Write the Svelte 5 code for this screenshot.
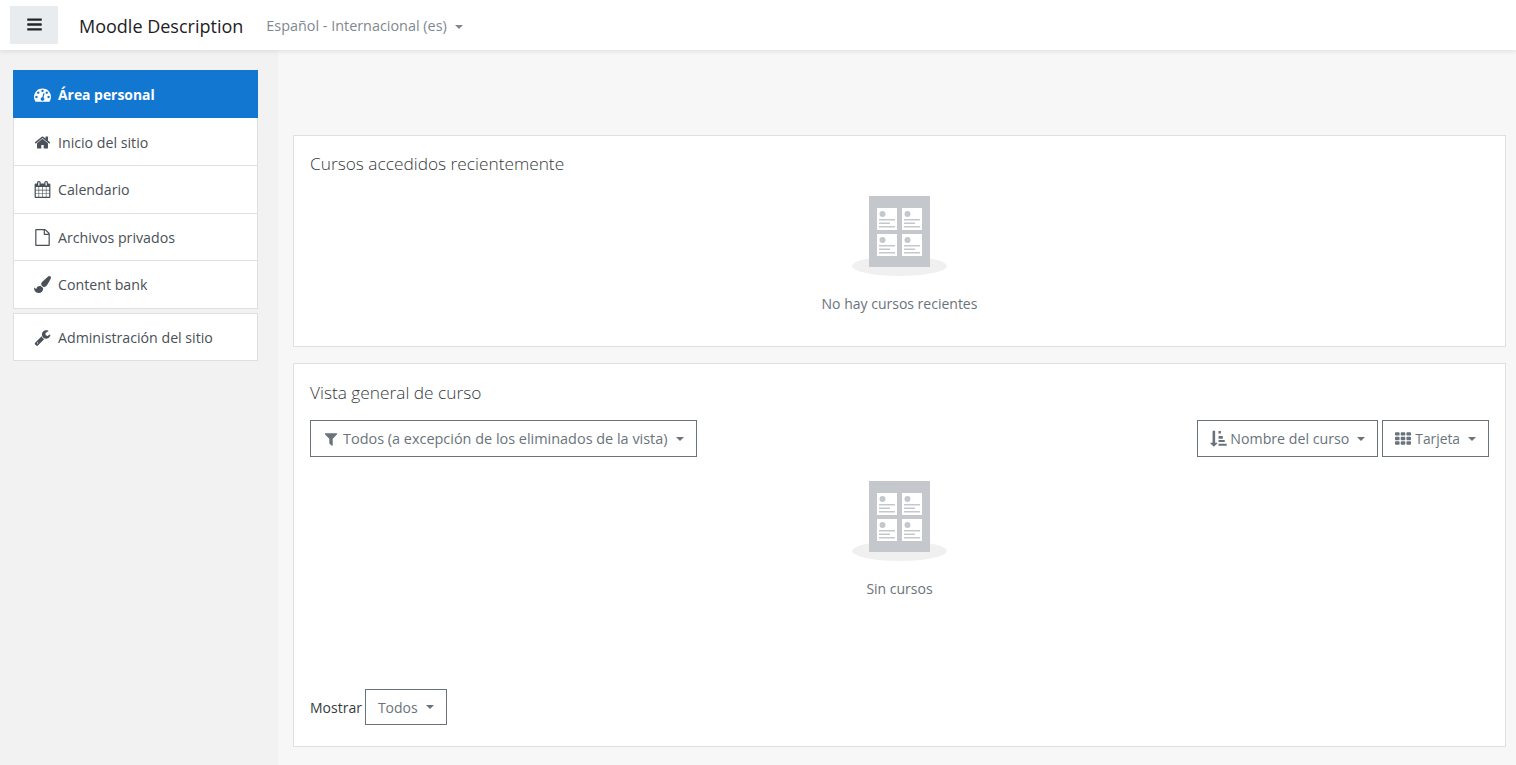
<script>
	const navTop = [
		{ label: 'Inicio del sitio', icon: 'home' },
		{ label: 'Calendario', icon: 'calendar' },
		{ label: 'Archivos privados', icon: 'file' },
		{ label: 'Content bank', icon: 'brush' }
	];

	const icons = {
		bars: 'M1664 1344v128q0 26-19 45t-45 19H192q-26 0-45-19t-19-45v-128q0-26 19-45t45-19h1408q26 0 45 19t19 45zm0-512v128q0 26-19 45t-45 19H192q-26 0-45-19t-19-45V832q0-26 19-45t45-19h1408q26 0 45 19t19 45zm0-512v128q0 26-19 45t-45 19H192q-26 0-45-19t-19-45V320q0-26 19-45t45-19h1408q26 0 45 19t19 45z',
		dashboard: 'M384 1152q0-53-37.5-90.5T256 1024t-90.5 37.5T128 1152t37.5 90.5T256 1280t90.5-37.5T384 1152zm192-448q0-53-37.5-90.5T448 576t-90.5 37.5T320 704t37.5 90.5T448 832t90.5-37.5T576 704zm428 505l101-382q6-26-7.5-48.5T1059 749t-48 6.5-30 39.5l-101 382q-60 5-107 43.5t-63 98.5q-20 77 20 146t117 89 146-20 89-117q16-60-6-117t-72-91zm660-57q0-53-37.5-90.5T1536 1024t-90.5 37.5-37.5 90.5 37.5 90.5 90.5 37.5 90.5-37.5 37.5-90.5zm-640-640q0-53-37.5-90.5T896 384t-90.5 37.5T768 512t37.5 90.5T896 640t90.5-37.5T1024 512zm448 192q0-53-37.5-90.5T1344 576t-90.5 37.5T1216 704t37.5 90.5 90.5 37.5 90.5-37.5T1472 704zm320 448q0 261-141 483-19 29-54 29H195q-35 0-54-29Q0 1414 0 1152q0-182 71-348t191-286 286-191 348-71 348 71 286 191 191 286 71 348z',
		home: 'M1472 992v480q0 26-19 45t-45 19h-384v-384H768v384H384q-26 0-45-19t-19-45V992q0-1 .5-3t.5-3l575-474 575 474q1 2 1 6zm223-69l-62 74q-8 9-21 11h-3q-13 0-21-7L896 424l-692 577q-12 8-24 7-13-2-21-11l-62-74q-8-10-7-23.5t11-21.5l719-599q32-26 76-26t76 26l244 204V288q0-14 9-23t23-9h192q14 0 23 9t9 23v408l219 182q10 8 11 21.5t-7 23.5z',
		calendar: 'M192 1664h288v-288H192v288zm352 0h320v-288H544v288zm-352-352h288V992H192v320zm352 0h320V992H544v320zM192 928h288V640H192v288zm736 736h320v-288H928v288zM544 928h320V640H544v288zm768 736h288v-288h-288v288zm-384-352h320V992H928v320zM576 448V160q0-13-9.5-22.5T544 128h-64q-13 0-22.5 9.5T448 160v288q0 13 9.5 22.5T480 480h64q13 0 22.5-9.5T576 448zm736 864h288V992h-288v320zM928 928h320V640H928v288zm384 0h288V640h-288v288zm32-480V160q0-13-9.5-22.5T1312 128h-64q-13 0-22.5 9.5T1216 160v288q0 13 9.5 22.5t22.5 9.5h64q13 0 22.5-9.5t9.5-22.5zm384-64v1280q0 52-38 90t-90 38H192q-52 0-90-38t-38-90V384q0-52 38-90t90-38h128v-96q0-66 47-113T480 0h64q66 0 113 47t47 113v96h384v-96q0-66 47-113t113-47h64q66 0 113 47t47 113v96h128q52 0 90 38t38 90z',
		file: 'M1596 380q28 28 48 76t20 88v1152q0 40-28 68t-68 28H224q-40 0-68-28t-28-68V96q0-40 28-68t68-28h896q40 0 88 20t76 48zm-444-244v376h376q-10-29-22-41l-313-313q-12-12-41-22zm384 1528V640h-416q-40 0-68-28t-28-68V128H256v1536h1280z',
		brush: 'M1615 0q70 0 122.5 46.5t52.5 116.5q0 63-45 151-332 629-465 752-97 91-218 91-126 0-216.5-92.5t-90.5-219.5q0-128 92-212l638-579q59-54 130-54zm-909 1034q39 76 106.5 130t150.5 76l1 71q4 213-129.5 347t-348.5 134q-123 0-218-46.5t-152.5-127.5-86.5-183-29-220q7 5 41 30t62 44.5 59 36.5 46 17q41 0 55-37 25-66 57.5-112.5t69.5-76 88-47.5 103-25.5 125-10.5z',
		wrench: 'M448 1472q0-26-19-45t-45-19-45 19-19 45 19 45 45 19 45-19 19-45zm644-420l-682 682q-37 37-90 37-52 0-91-37l-106-108q-38-36-38-90 0-53 38-91l681-681q39 98 114.5 173.5T1092 1052zm634-435q0 39-23 106-47 134-164.5 217.5T1280 1024q-185 0-316.5-131.5T832 576t131.5-316.5T1280 128q58 0 121.5 16.5T1509 191q16 11 16 28t-16 28l-293 169v224l193 107q5-3 79-48.5t135.5-81 70.5-35.5q15 0 23.5 10t8.5 25z',
		filter: 'M1595 295q17 41-14 70l-493 493v742q0 42-39 59-13 5-25 5-27 0-45-19l-256-256q-19-19-19-45V858L211 365q-31-29-14-70 17-39 59-39h1280q42 0 59 39z',
		sort: 'M736 1312q0 12-10 24l-319 319q-10 9-23 9-12 0-23-9l-320-320q-15-16-7-35 8-20 30-20h192V96q0-14 9-23t23-9h192q14 0 23 9t9 23v1184h192q14 0 23 9t9 23zM1088 128v192q0 14-9 23t-23 9H880q-14 0-23-9t-9-23V128q0-14 9-23t23-9h176q14 0 23 9t9 23zm192 512v192q0 14-9 23t-23 9H880q-14 0-23-9t-9-23V640q0-14 9-23t23-9h368q14 0 23 9t9 23zm192 384v128q0 14-9 23t-23 9H880q-14 0-23-9t-9-23v-128q0-14 9-23t23-9h560q14 0 23 9t9 23zm192 384v128q0 14-9 23t-23 9H880q-14 0-23-9t-9-23v-128q0-14 9-23t23-9h752q14 0 23 9t9 23z',
		th: 'M512 1248v192q0 40-28 68t-68 28H96q-40 0-68-28t-28-68v-192q0-40 28-68t68-28h320q40 0 68 28t28 68zm0-512v192q0 40-28 68t-68 28H96q-40 0-68-28t-28-68V736q0-40 28-68t68-28h320q40 0 68 28t28 68zm640 512v192q0 40-28 68t-68 28H736q-40 0-68-28t-28-68v-192q0-40 28-68t68-28h320q40 0 68 28t28 68zM512 224v192q0 40-28 68t-68 28H96q-40 0-68-28t-28-68V224q0-40 28-68t68-28h320q40 0 68 28t28 68zm640 512v192q0 40-28 68t-68 28H736q-40 0-68-28t-28-68V736q0-40 28-68t68-28h320q40 0 68 28t28 68zm640 512v192q0 40-28 68t-68 28h-320q-40 0-68-28t-28-68v-192q0-40 28-68t68-28h320q40 0 68 28t28 68zm-640-1024v192q0 40-28 68t-68 28H736q-40 0-68-28t-28-68V224q0-40 28-68t68-28h320q40 0 68 28t28 68zm640 512v192q0 40-28 68t-68 28h-320q-40 0-68-28t-28-68V736q0-40 28-68t68-28h320q40 0 68 28t28 68zm0-512v192q0 40-28 68t-68 28h-320q-40 0-68-28t-28-68V224q0-40 28-68t68-28h320q40 0 68 28t28 68z'
	};

	const slots = [
		[8, 12],
		[33, 12],
		[8, 38],
		[33, 38]
	];
</script>

{#snippet icon(name, cls = '')}
	<svg class="fa {cls}" viewBox="0 0 1792 1792" aria-hidden="true"><path d={icons[name]} fill="currentColor" /></svg>
{/snippet}

{#snippet empty(text)}
	<div class="empty">
		<svg class="placeholder" width="95" height="80" viewBox="0 0 95 80" aria-hidden="true">
			<ellipse cx="47.5" cy="70" rx="47.5" ry="10" fill="#f0f0f0" />
			<rect x="17" y="0" width="61" height="71" fill="#c4c8cc" />
			{#each slots as [x, y]}
				<g transform="translate({x + 17} {y})">
					<rect width="20" height="22" fill="#fff" />
					<circle cx="5.5" cy="6" r="3" fill="#c4c8cc" />
					<rect x="2" y="11" width="16" height="1.5" fill="#c4c8cc" />
					<rect x="2" y="14.5" width="11" height="1.5" fill="#c4c8cc" />
					<rect x="2" y="18" width="16" height="1.5" fill="#c4c8cc" />
				</g>
			{/each}
		</svg>
		<p>{text}</p>
	</div>
{/snippet}

<header class="navbar">
	<button class="toggler" aria-label="Menu">{@render icon('bars')}</button>
	<span class="brand">Moodle Description</span>
	<span class="lang">Español ‎- Internacional ‎(es)‎<i class="caret"></i></span>
</header>

<div class="page">
	<aside class="sidebar">
		<nav class="group">
			<a class="item active" href="#top">{@render icon('dashboard')}Área personal</a>
			{#each navTop as link}
				<a class="item" href="#top">{@render icon(link.icon)}{link.label}</a>
			{/each}
		</nav>
		<nav class="group">
			<a class="item single" href="#top">{@render icon('wrench')}Administración del sitio</a>
		</nav>
	</aside>

	<main class="content">
		<section class="card recent">
			<h5>Cursos accedidos recientemente</h5>
			{@render empty('No hay cursos recientes')}
		</section>

		<section class="card overview">
			<h5>Vista general de curso</h5>
			<div class="filters">
				<button class="btn wide">{@render icon('filter')}Todos (a excepción de los eliminados de la vista)<i class="caret"></i></button>
				<div class="right">
					<button class="btn sort">{@render icon('sort', 'big')}Nombre del curso<i class="caret"></i></button>
					<button class="btn card-view">{@render icon('th')}Tarjeta<i class="caret"></i></button>
				</div>
			</div>
			{@render empty('Sin cursos')}
			<div class="paging">
				<span>Mostrar</span>
				<button class="btn small">Todos<i class="caret"></i></button>
			</div>
		</section>
	</main>
</div>

<style>
	:global(body) {
		background: #f7f7f7;
		font-family: 'Open Sans', 'Noto Sans', sans-serif;
		font-size: 14px;
		color: #495057;
	}

	.navbar {
		display: flex;
		align-items: center;
		height: 50px;
		background: #fff;
		box-shadow: 0 2px 4px rgba(0, 0, 0, 0.08);
		position: relative;
		box-sizing: border-box;
		padding-left: 10px;
	}

	.toggler {
		width: 48px;
		height: 38px;
		margin-top: -1px;
		border: none;
		background: #e9ecef;
		color: #212529;
		padding: 0;
		display: flex;
		align-items: center;
		justify-content: center;
	}

	.toggler .fa {
		width: 17px;
		height: 17px;
	}

	.brand {
		margin-left: 21px;
		margin-top: 1px;
		font-size: 18px;
		color: #1d2125;
	}

	.lang {
		margin-left: 23px;
		font-size: 14.4px;
		color: #7f8890;
	}

	.caret {
		display: inline-block;
		margin-left: 8px;
		vertical-align: 2px;
		border-top: 4.5px solid currentColor;
		border-left: 4px solid transparent;
		border-right: 4px solid transparent;
	}

	.page {
		display: grid;
		grid-template-columns: 278px 1fr;
		min-height: 715px;
	}

	.sidebar {
		background: #f2f2f2;
		padding: 20px 20px 0 13px;
		display: flex;
		flex-direction: column;
		gap: 4.5px;
	}

	.group {
		display: flex;
		flex-direction: column;
		background: #fff;
	}

	.item {
		display: flex;
		align-items: center;
		height: 47.5px;
		padding: 1px 0 0 19.5px;
		box-sizing: border-box;
		font-size: 14.2px;
		color: #495057;
		text-decoration: none;
		border-bottom: 1px solid #dfdfdf;
		border-left: 1px solid #dfdfdf;
		border-right: 1px solid #dfdfdf;
	}

	.item .fa {
		width: 17px;
		height: 17px;
		margin-right: 7.5px;
		flex: none;
	}

	.item.active {
		height: 48px;
		background: #1177d1;
		color: #fff;
		font-weight: 700;
		font-size: 13.9px;
		border-color: #1177d1;
	}

	.item.active + .item {
		height: 48px;
	}

	.item.single {
		height: 48px;
		border-top: 1px solid #dfdfdf;
	}

	.content {
		padding: 85px 10px 18px 15px;
		display: flex;
		flex-direction: column;
		gap: 16px;
	}

	.card {
		background: #fff;
		border: 1px solid #dfdfdf;
		padding: 16px;
		box-sizing: border-box;
	}

	.recent {
		height: 212px;
	}

	.overview {
		height: 384px;
		display: flex;
		flex-direction: column;
	}

	h5 {
		margin: 0;
		font-size: 17.3px;
		font-weight: 300;
		line-height: 24px;
		color: #373a3c;
	}

	.overview h5 {
		padding-top: 1px;
	}

	.empty {
		display: flex;
		flex-direction: column;
		align-items: center;
		margin-top: 20px;
		color: #6a737b;
	}

	.placeholder {
		display: block;
	}

	.empty p {
		margin: 18px 0 0;
		line-height: 20px;
	}

	.filters {
		display: flex;
		justify-content: space-between;
		margin-top: 15px;
	}

	.right {
		display: flex;
		gap: 4px;
	}

	.overview .empty {
		margin-top: 24px;
	}

	.btn {
		height: 37px;
		padding: 0 12px;
		border: 1px solid #6a737b;
		background: #fff;
		color: #6a737b;
		font: inherit;
		display: inline-flex;
		align-items: center;
	}

	.btn.wide {
		font-size: 14.45px;
	}

	.btn.sort {
		font-size: 14.2px;
	}

	.btn.card-view {
		font-size: 13.8px;
	}

	.btn .fa {
		width: 16px;
		height: 16px;
		margin-right: 4px;
	}

	.btn .fa.big {
		width: 18px;
		height: 18px;
		margin-right: 2px;
	}

	.small {
		height: 36px;
	}

	.paging {
		margin-top: auto;
		display: flex;
		align-items: center;
		gap: 3px;
		color: #373a3c;
		padding-bottom: 5px;
	}
</style>
